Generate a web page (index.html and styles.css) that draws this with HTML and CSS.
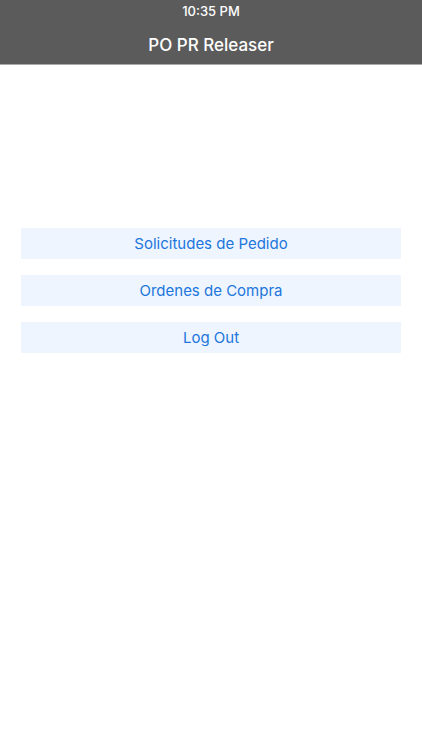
FILE: index.html
```html
<!DOCTYPE html>
<html>
<head>
<meta charset="utf-8">
<link rel="stylesheet" href="styles.css">
</head>
<body>
<header class="topbar">
  <div class="status">10:35 PM</div>
  <div class="title">PO PR Releaser</div>
</header>
<main class="menu">
  <button class="menu-btn">Solicitudes de Pedido</button>
  <button class="menu-btn">Ordenes de Compra</button>
  <button class="menu-btn">Log Out</button>
</main>
</body>
</html>
```
FILE: styles.css
```css
html, body {
  margin: 0;
  padding: 0;
  background: #ffffff;
  font-family: "Inter", "Liberation Sans", Arial, sans-serif;
}
.topbar {
  background: #5b5b5b;
  height: 64px;
  border-bottom: 1px solid #a9a9a9;
  color: #ffffff;
  display: flex;
  flex-direction: column;
  align-items: center;
}
.status {
  font-size: 13px;
  font-weight: 500;
  margin-top: 3px;
  line-height: 16px;
}
.title {
  font-size: 17px;
  font-weight: 500;
  margin-top: 16px;
  line-height: 20px;
}
.menu {
  display: flex;
  flex-direction: column;
  gap: 16px;
  padding: 163px 21px 0 21px;
}
.menu-btn {
  height: 31px;
  border: none;
  margin: 0;
  padding: 0;
  background: #eff5fe;
  color: #2176dc;
  font-family: "Inter", "Liberation Sans", Arial, sans-serif;
  font-size: 15px;
  font-weight: 400;
  text-align: center;
}
```
